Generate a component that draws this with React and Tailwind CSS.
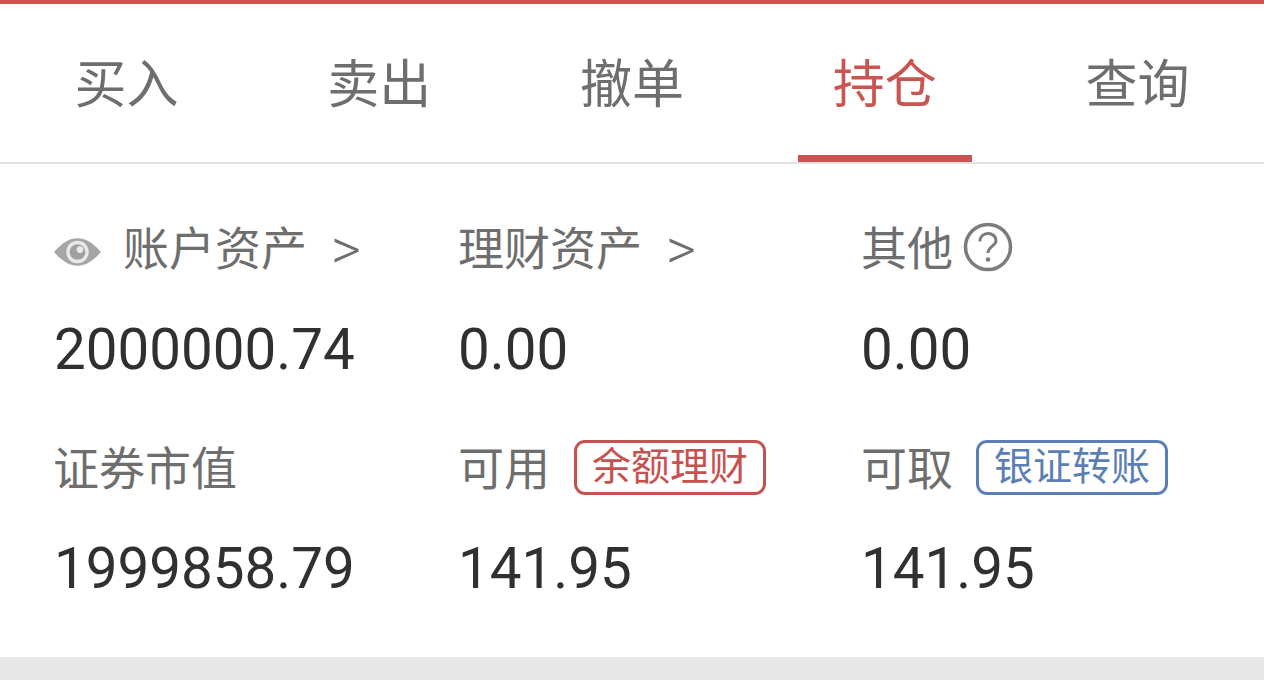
import React from 'react';

const CJK = "font-['Roboto','Noto_Sans_CJK_SC',sans-serif]";

const tabs = ['买入', '卖出', '撤单', '持仓', '查询'];

function Eye() {
  return (
    <svg width="47" height="30" viewBox="0 0 48 30" className="shrink-0 mt-[6px]">
      <path d="M0 15 C9 5 16 1 24 1 C32 1 39 5 48 15 C39 25 32 29 24 29 C16 29 9 25 0 15 Z" fill="#a6a6a6" />
      <circle cx="24" cy="15" r="11.500" fill="#e9e9e9" />
      <circle cx="24" cy="15" r="8" fill="#a0a0a0" />
      <circle cx="26.500" cy="12.500" r="3.500" fill="#e9e9e9" />
    </svg>
  );
}

function Help() {
  return (
    <svg width="50" height="50" viewBox="0 0 50 50" className="shrink-0">
      <circle cx="25" cy="25" r="22.500" fill="none" stroke="#7c7c7c" strokeWidth="3.500" />
      <path d="M17 19.500 C17 14.500 20.500 11.500 25 11.500 C29.500 11.500 33 14.500 33 18.500 C33 24 25 24.500 25 31" fill="none" stroke="#7c7c7c" strokeWidth="3" />
      <circle cx="25" cy="37.500" r="2.300" fill="#7c7c7c" />
    </svg>
  );
}

function Badge({ children, color }) {
  return (
    <span className={`flex items-center justify-center w-[192px] h-[55px] rounded-[11px] border-[3px] text-[39px] leading-none ${color}`}>
      {children}
    </span>
  );
}

function Arrow() {
  return <span className="ml-[24px] text-[58px] font-light leading-none">&gt;</span>;
}

function Label({ children }) {
  return <div className="flex items-center h-[56px] text-[46px] leading-none text-[#6e6e6e]">{children}</div>;
}

function Value({ children }) {
  return <div className="flex items-center h-[64px] text-[56.500px] leading-none text-[#303030]">{children}</div>;
}

export default function App() {
  return (
    <div className={`w-[1264px] h-[680px] overflow-hidden bg-white flex flex-col ${CJK}`}>
      <div className="h-[4px] bg-[#cb5450]" />
      <div className="flex h-[160px] border-b-2 border-[#e2e2e2]">
        {tabs.map((t, i) => (
          <div key={t} className="relative flex-1 flex items-center justify-center pt-[5px]">
            <span className={`text-[52px] leading-none ${i === 3 ? 'text-[#cb5450]' : 'text-[#6e6e6e]'}`}>{t}</span>
            {i === 3 && <div className="absolute left-[40px] bottom-0 w-[174px] h-[7px] bg-[#cb5450]" />}
          </div>
        ))}
      </div>
      <div className="flex-1 grid grid-cols-[404px_403px_1fr] content-start pl-[54px] pt-[57px]">
        <Label>
          <Eye />
          <span className="ml-[22px]">账户资产</span>
          <Arrow />
        </Label>
        <Label>
          <span>理财资产</span>
          <Arrow />
        </Label>
        <Label>
          <span>其他</span>
          <span className="ml-[10px] mb-[4px]"><Help /></span>
        </Label>

        <div className="col-span-3 grid grid-cols-subgrid mt-[41px]">
          <Value>2000000.74</Value>
          <Value>0.00</Value>
          <Value>0.00</Value>
        </div>

        <div className="col-span-3 grid grid-cols-subgrid mt-[59px]">
          <Label><span className="-ml-[1px]">证券市值</span></Label>
          <Label>
            <span>可用</span>
            <span className="ml-[24px] mb-[4px]"><Badge color="border-[#c6524f] text-[#c6524f]">余额理财</Badge></span>
          </Label>
          <Label>
            <span>可取</span>
            <span className="ml-[23px] mb-[4px]"><Badge color="border-[#5b7fb5] text-[#5b7fb5]">银证转账</Badge></span>
          </Label>
        </div>

        <div className="col-span-3 grid grid-cols-subgrid mt-[40px]">
          <Value>1999858.79</Value>
          <Value>141.95</Value>
          <Value>141.95</Value>
        </div>
      </div>
      <div className="h-[23px] bg-[#e8e8e8]" />
    </div>
  );
}
